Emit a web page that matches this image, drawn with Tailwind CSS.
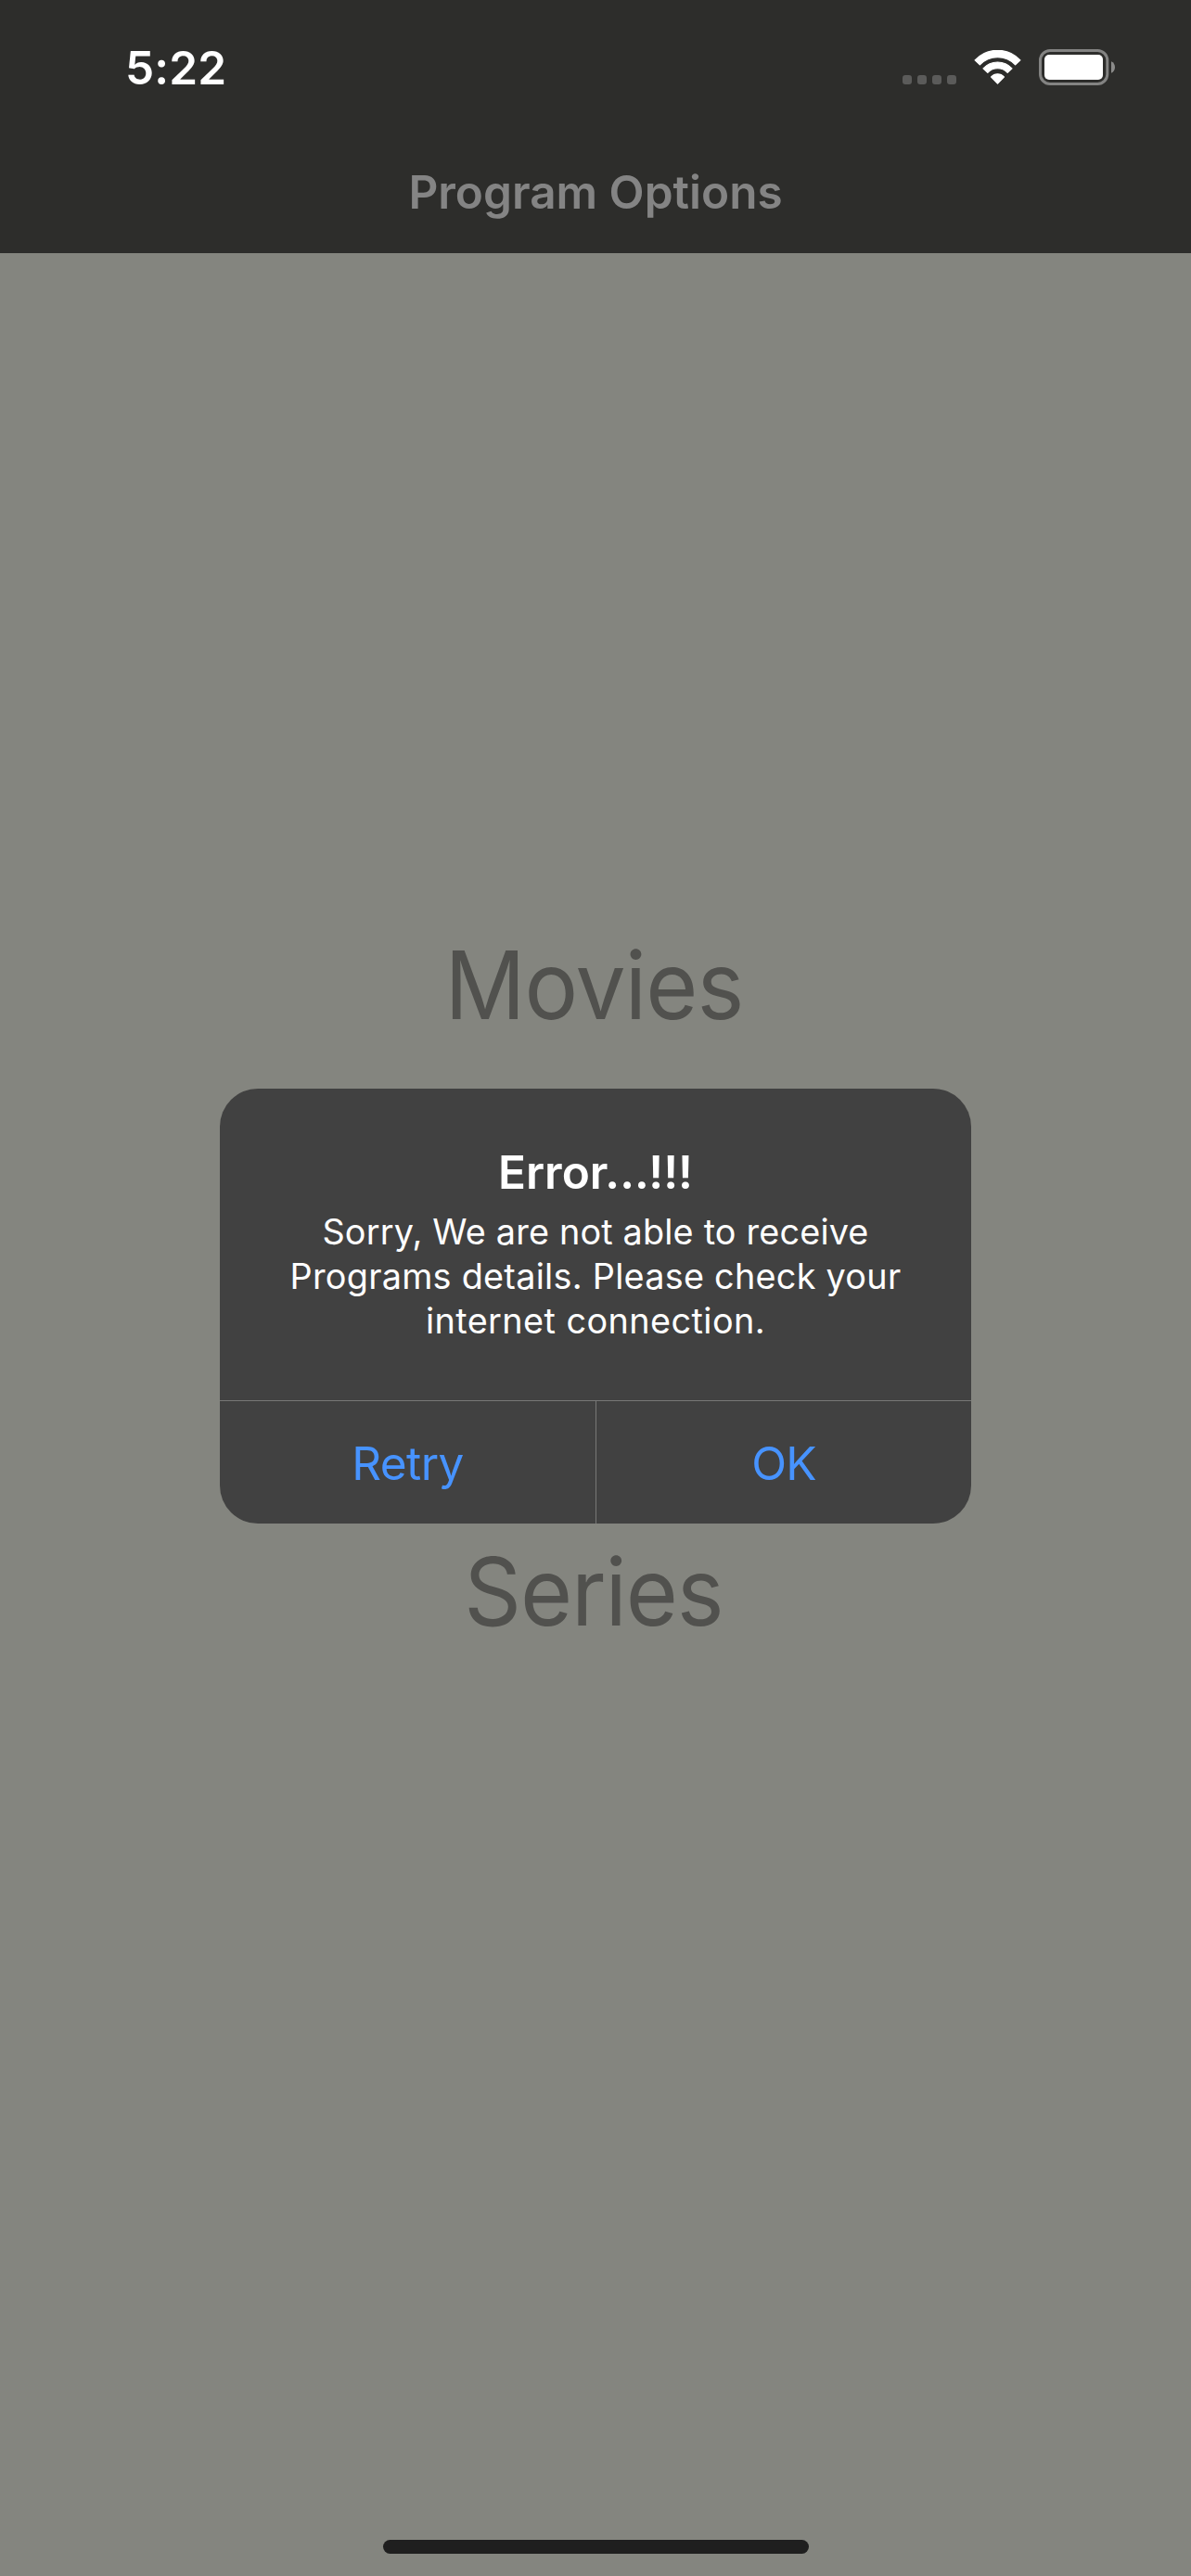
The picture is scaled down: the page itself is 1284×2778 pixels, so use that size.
<!DOCTYPE html>
<html lang="en">
<head>
<meta charset="utf-8">
<title>Program Options</title>
<script src="https://cdn.jsdelivr.net/npm/@tailwindcss/browser@4"></script>
</head>
<body class="relative flex h-[2778px] w-[1284px] flex-col overflow-hidden bg-[#84857f] font-['Inter',sans-serif] antialiased">
  <header class="flex h-[273px] shrink-0 flex-col bg-[#2d2d2b]">
    <!-- Status bar -->
    <div class="flex h-[60px] mt-[43px] items-start justify-between pl-[135px] pr-[82px]">
      <time class="text-[49.5px] leading-[60px] font-semibold tracking-[0.2px] text-white">5:22</time>
      <div class="flex pt-[10px]">
        <div class="mt-[28px] mr-[19px] flex gap-[6px]">
          <span class="size-[10px] rounded-[3px] bg-[#5b5b5a]"></span>
          <span class="size-[10px] rounded-[3px] bg-[#5b5b5a]"></span>
          <span class="size-[10px] rounded-[3px] bg-[#5b5b5a]"></span>
          <span class="size-[10px] rounded-[3px] bg-[#5b5b5a]"></span>
        </div>
        <svg class="mt-[1px] mr-[19px] h-[38px] w-[51px]" viewBox="0 0 51 38" fill="white" stroke="white" stroke-width="1.2" stroke-linejoin="round">
          <path d="M1.1 10.9A33.4 33.4 0 0 1 49.9 10.9L44.6 15.9A26.4 26.4 0 0 0 6.4 15.9Z"/>
          <path d="M10 19.8A21.1 21.1 0 0 1 41 19.8L36.2 24.4A14.6 14.6 0 0 0 14.8 24.4Z"/>
          <path d="M18.6 29A9 9 0 0 1 32.4 29L25.5 36.2Z"/>
        </svg>
        <svg class="h-[39px] w-[82px]" viewBox="0 0 82 39" fill="none">
          <rect x="1.5" y="1.5" width="72.3" height="36" rx="10.5" stroke="#838382" stroke-width="3"/>
          <rect x="6" y="6" width="63" height="27" rx="5" fill="white"/>
          <path d="M78 13.2C80.6 14.2 82 16.6 82 19.5S80.6 24.8 78 25.8Z" fill="#8b8b8a"/>
        </svg>
      </div>
    </div>
    <h1 class="mt-[74px] text-center text-[49.5px] leading-[60px] font-semibold text-[#848484]">Program Options</h1>
  </header>

  <main class="flex flex-col items-center text-[101.3px] leading-[120px] text-[#51514e]">
    <div class="mt-[729px] mr-[3px] scale-x-95 tracking-[-0.9px]">Movies</div>
    <div class="mt-[534px] mr-[5px] scale-x-95 tracking-[-1.2px]">Series</div>
  </main>

  <!-- Alert -->
  <section role="alertdialog" class="absolute top-[1174px] left-[237px] flex h-[469px] w-[810px] flex-col overflow-hidden rounded-[41px] bg-[#414141] text-center text-white">
    <div class="h-[336px] pt-[60px]">
      <h2 class="text-[49.5px] leading-[60px] font-semibold">Error...!!!</h2>
      <p class="mt-[10px] text-[37.8px] leading-[48px]"><span class="tracking-[0.17px]">Sorry, We are not able to receive</span><br><span class="tracking-[0.26px]">Programs details. Please check your</span><br><span class="tracking-[0.43px]">internet connection.</span></p>
    </div>
    <div class="flex h-[133px] divide-x divide-[#777776] border-t border-[#777776] text-[49.5px] text-[#4793ff]">
      <button class="w-[406px] pt-[2px] tracking-[-0.6px]">Retry</button>
      <button class="flex-1 pt-[2px] tracking-[-0.9px]">OK</button>
    </div>
  </section>

  <div class="mt-auto mb-[24px] ml-[413px] h-[15px] w-[459px] rounded-full bg-[#1f1f1f]"></div>
</body>
</html>
